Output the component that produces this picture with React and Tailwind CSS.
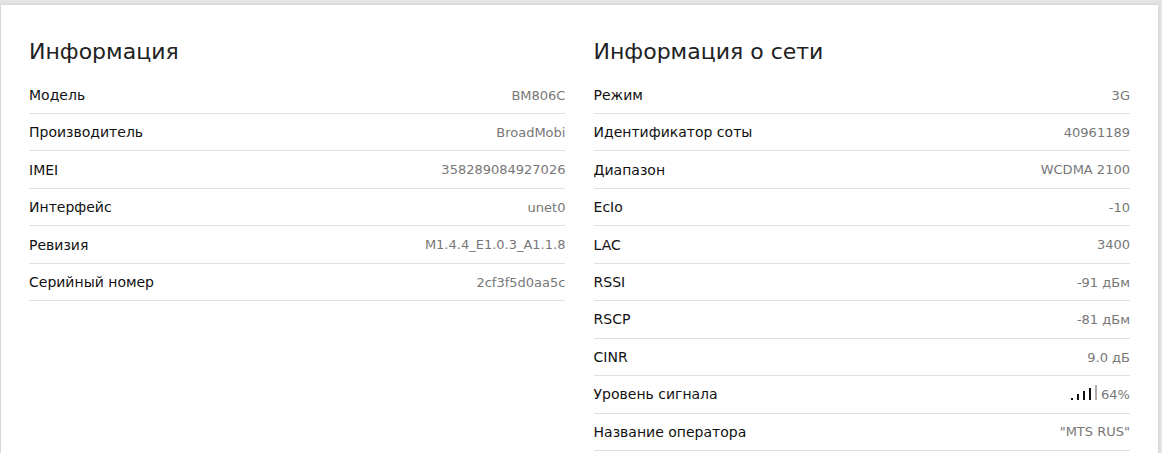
const left = [
  ["Модель", "BM806C"],
  ["Производитель", "BroadMobi"],
  ["IMEI", "358289084927026"],
  ["Интерфейс", "unet0"],
  ["Ревизия", "M1.4.4_E1.0.3_A1.1.8"],
  ["Серийный номер", "2cf3f5d0aa5c"],
];
const right = [
  ["Режим", "3G"],
  ["Идентификатор соты", "40961189"],
  ["Диапазон", "WCDMA 2100"],
  ["EcIo", "-10"],
  ["LAC", "3400"],
  ["RSSI", "-91 дБм"],
  ["RSCP", "-81 дБм"],
  ["CINR", "9.0 дБ"],
  ["Уровень сигнала", "signal"],
  ["Название оператора", '"MTS RUS"'],
];

function Signal() {
  const bars = [
    [2, "bg-[#111111]"],
    [6, "bg-[#111111]"],
    [9, "bg-[#111111]"],
    [12, "bg-[#111111]"],
    [15, "bg-[#aaaaaa]"],
  ];
  return (
    <span className="flex items-end gap-[4px] mr-[4px] h-[16px] mb-[6px]">
      {bars.map(([h, c], i) => (
        <span key={i} className={`block w-[2px] ${c}`} style={{ height: h }} />
      ))}
    </span>
  );
}

function Column({ title, rows }) {
  return (
    <section className="min-w-0">
      <h2 className="text-[22px] leading-[26px] text-[#212121] mb-[11.6px]">{title}</h2>
      <div>
        {rows.map(([k, v]) => (
          <div key={k} className="flex justify-between items-center h-[37.45px] pt-[0.9px] border-b border-[#e0e0e0] text-[14px]">
            <span className="text-[#111111]">{k}</span>
            {v === "signal" ? (
              <span className="flex items-center text-[#777777] text-[13px]"><Signal />64%</span>
            ) : (
              <span className="text-[#777777] text-[13px]">{v}</span>
            )}
          </div>
        ))}
      </div>
    </section>
  );
}

export default function App() {
  return (
    <div className="h-[453px] overflow-hidden bg-[#e4e4e4] pt-[5px] pl-px pr-[4px] font-['DejaVu_Sans',sans-serif]">
      <div className="bg-white h-full pt-[34px] pl-[28px] pr-[28px] grid grid-cols-[536.45px_536.45px] gap-x-[28.1px] shadow-[0_0_3px_rgba(0,0,0,0.15)]">
        <Column title="Информация" rows={left} />
        <Column title="Информация о сети" rows={right} />
      </div>
    </div>
  );
}
